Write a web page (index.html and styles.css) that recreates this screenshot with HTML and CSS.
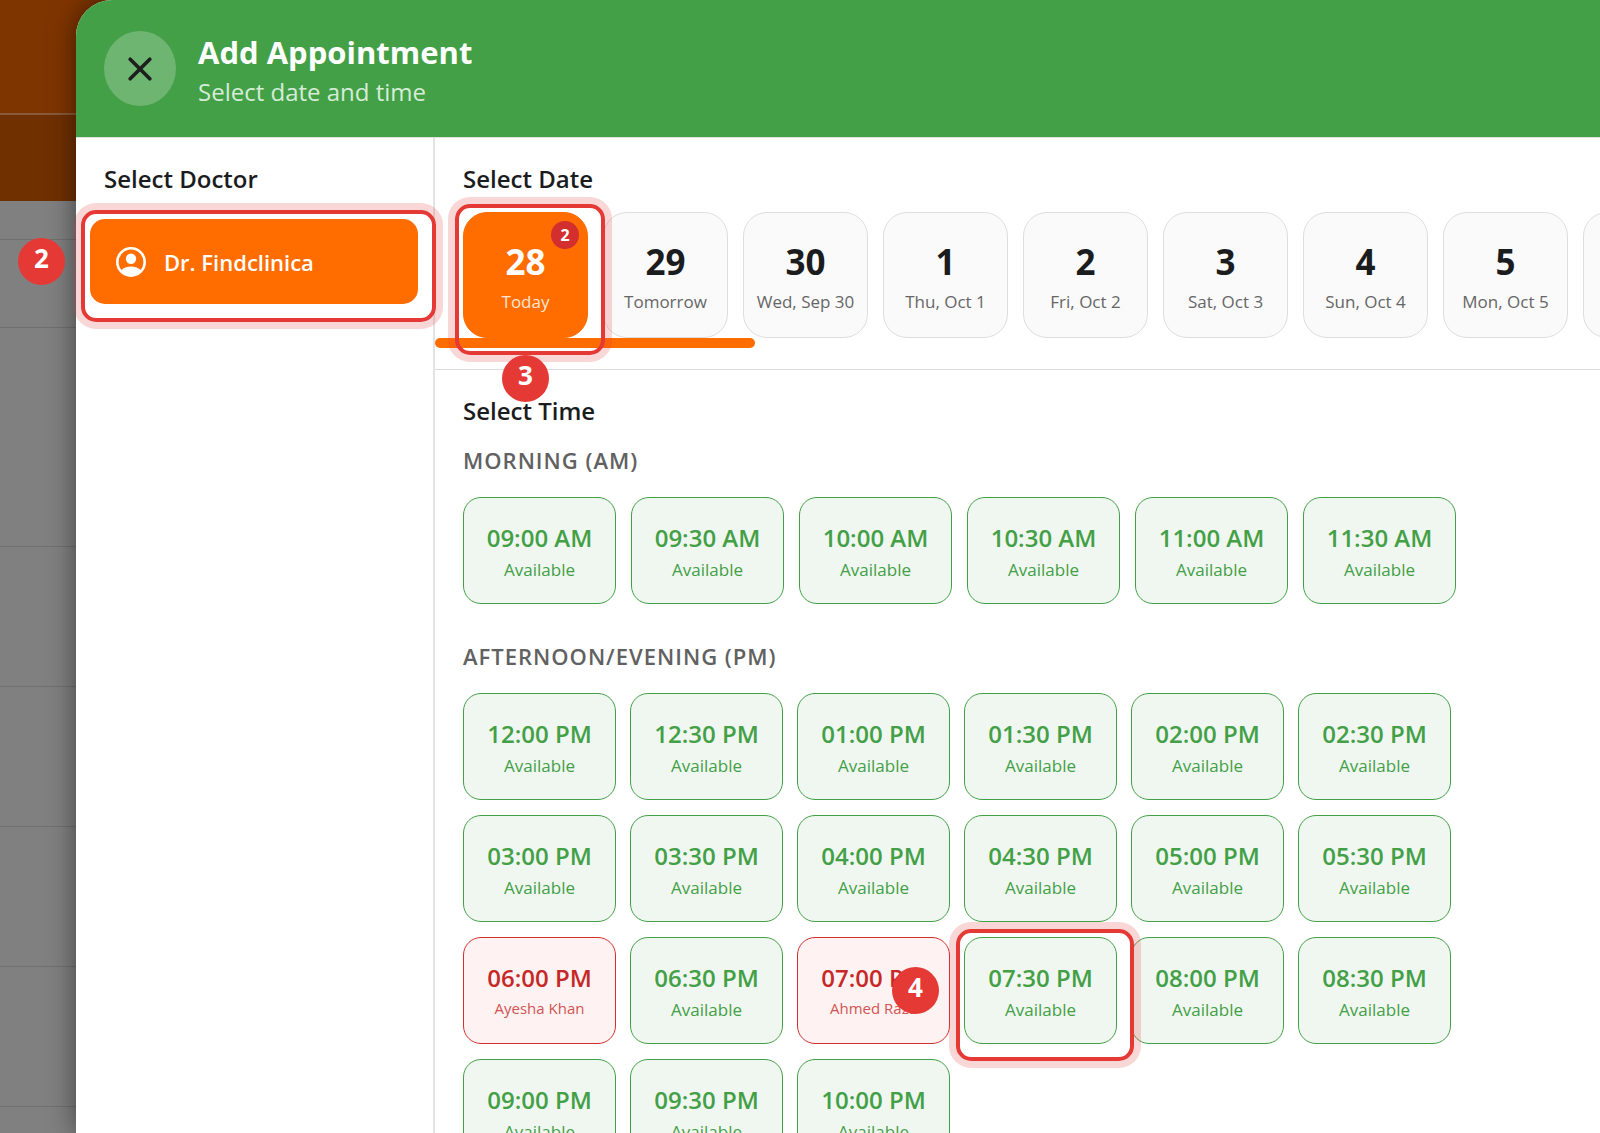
FILE: index.html
```html
<!DOCTYPE html>
<html lang="en">
<head>
  <meta charset="UTF-8" />
  <meta name="viewport" content="width=device-width, initial-scale=1.0" />
  <title>Add Appointment</title>
  <link rel="stylesheet" href="styles.css">
</head>
<body>

  <!-- dimmed calendar behind the drawer -->
  <div class="backdrop">
    <div class="bar bar-top"></div>
    <div class="bar bar-sub"></div>
    <div class="line line-xs"></div>
    <div class="line line-sm"></div>
    <div class="line line-lg"></div>
    <div class="line"></div>
    <div class="line"></div>
    <div class="line"></div>
    <div class="line"></div>
    <span class="step step-doctor">2</span>
  </div>

  <div class="drawer">
    <header class="drawer-header">
      <button class="close" aria-label="Close">
        <svg width="24" height="24" viewBox="0 0 24 24" fill="none" stroke="#1c1f1c" stroke-width="3.6" stroke-linecap="round">
          <path d="M2.2 2.2l19.6 19.6M21.8 2.2L2.2 21.8" />
        </svg>
      </button>
      <div class="drawer-title">
        <h1>Add Appointment</h1>
        <p>Select date and time</p>
      </div>
    </header>

    <div class="drawer-body">
      <aside class="doctors">
        <h2>Select Doctor</h2>
        <button class="doctor">
          <svg width="30" height="30" viewBox="0 0 30 30">
            <circle cx="15" cy="15" r="13.7" fill="none" stroke="#fff" stroke-width="2.6" />
            <circle cx="15" cy="11.8" r="5.2" fill="#fff" />
            <path d="M5 23.6C7.2 20.8 11 19.4 15 19.4s7.8 1.4 10 4.2C22.8 26.8 19 28.6 15 28.6S7.2 26.8 5 23.6z" fill="#fff" />
          </svg>
          <span>Dr. Findclinica</span>
          <span class="highlight"></span>
        </button>
      </aside>

      <main class="picker">
        <section class="dates">
          <h2>Select Date</h2>
          <div class="date-list">
            <button class="date active">
              <b>28</b><span>Today</span>
              <i class="count">2</i>
              <span class="highlight"></span>
              <span class="step step-date">3</span>
            </button>
            <button class="date"><b>29</b><span>Tomorrow</span></button>
            <button class="date"><b>30</b><span>Wed, Sep 30</span></button>
            <button class="date"><b>1</b><span>Thu, Oct 1</span></button>
            <button class="date"><b>2</b><span>Fri, Oct 2</span></button>
            <button class="date"><b>3</b><span>Sat, Oct 3</span></button>
            <button class="date"><b>4</b><span>Sun, Oct 4</span></button>
            <button class="date"><b>5</b><span>Mon, Oct 5</span></button>
            <button class="date" aria-label="Next day"></button>
          </div>
          <div class="scroll-thumb"></div>
        </section>

        <section class="times">
          <h2>Select Time</h2>

          <h3>MORNING (AM)</h3>
          <div class="slots slots-am">
            <button class="slot"><b>09:00 AM</b><span>Available</span></button>
            <button class="slot"><b>09:30 AM</b><span>Available</span></button>
            <button class="slot"><b>10:00 AM</b><span>Available</span></button>
            <button class="slot"><b>10:30 AM</b><span>Available</span></button>
            <button class="slot"><b>11:00 AM</b><span>Available</span></button>
            <button class="slot"><b>11:30 AM</b><span>Available</span></button>
          </div>

          <h3>AFTERNOON/EVENING (PM)</h3>
          <div class="slots">
            <button class="slot"><b>12:00 PM</b><span>Available</span></button>
            <button class="slot"><b>12:30 PM</b><span>Available</span></button>
            <button class="slot"><b>01:00 PM</b><span>Available</span></button>
            <button class="slot"><b>01:30 PM</b><span>Available</span></button>
            <button class="slot"><b>02:00 PM</b><span>Available</span></button>
            <button class="slot"><b>02:30 PM</b><span>Available</span></button>
            <button class="slot"><b>03:00 PM</b><span>Available</span></button>
            <button class="slot"><b>03:30 PM</b><span>Available</span></button>
            <button class="slot"><b>04:00 PM</b><span>Available</span></button>
            <button class="slot"><b>04:30 PM</b><span>Available</span></button>
            <button class="slot"><b>05:00 PM</b><span>Available</span></button>
            <button class="slot"><b>05:30 PM</b><span>Available</span></button>
            <button class="slot booked"><b>06:00 PM</b><span>Ayesha Khan</span></button>
            <button class="slot"><b>06:30 PM</b><span>Available</span></button>
            <button class="slot booked"><b>07:00 PM</b><span>Ahmed Raza</span></button>
            <button class="slot picked">
              <b>07:30 PM</b><span>Available</span>
              <span class="highlight"></span>
              <span class="step step-time">4</span>
            </button>
            <button class="slot"><b>08:00 PM</b><span>Available</span></button>
            <button class="slot"><b>08:30 PM</b><span>Available</span></button>
            <button class="slot"><b>09:00 PM</b><span>Available</span></button>
            <button class="slot"><b>09:30 PM</b><span>Available</span></button>
            <button class="slot"><b>10:00 PM</b><span>Available</span></button>
          </div>
        </section>
      </main>
    </div>
  </div>

</body>
</html>
```
FILE: styles.css
```css
* {
  box-sizing: border-box;
}

html, body {
  margin: 0;
  height: 100%;
  overflow: hidden;
}

body {
  display: flex;
  font-family: "Open Sans", "Noto Sans", sans-serif;
  background: #808080;
  color: #1b1c1e;
}

h1, h2, h3, p {
  margin: 0;
}

button {
  font-family: inherit;
  color: inherit;
  cursor: pointer;
}

/* calendar behind, runs under the rounded corner of the drawer */
.backdrop {
  position: relative;
  flex: 0 0 116px;
  margin-right: -40px;
}

.bar-top {
  height: 115px;
  background: #7f3500;
  border-bottom: 2px solid #875a3c;
}

.bar-sub {
  height: 86px;
  background: #703000;
}

.line {
  height: 140px;
  border-bottom: 1px solid #707070;
}

.line-xs {
  height: 39px;
}

.line-sm {
  height: 88px;
}

.line-lg {
  height: 219px;
}

/* drawer */
.drawer {
  position: relative;
  flex: 1;
  min-width: 0;
  height: 100vh;
  display: flex;
  flex-direction: column;
  background: #fff;
  border-top-left-radius: 36px;
  box-shadow: 0 0 28px rgba(0, 0, 0, 0.5);
}

.drawer-header {
  display: flex;
  align-items: center;
  gap: 22px;
  height: 137px;
  flex-shrink: 0;
  padding: 0 28px;
  background: #43a047;
  border-top-left-radius: 36px;
  color: #fff;
}

.close {
  display: flex;
  align-items: center;
  justify-content: center;
  width: 72px;
  height: 75px;
  padding: 0;
  border: none;
  border-radius: 50%;
  background: #6eb571;
}

.drawer-title {
  padding-top: 5px;
}

.drawer-header h1 {
  font-size: 31px;
  line-height: 42px;
  font-weight: 700;
}

.drawer-header p {
  font-size: 24px;
  line-height: 38px;
  color: #d6ecd7;
}

.drawer-body {
  flex: 1;
  min-height: 0;
  display: flex;
  border-top: 1px solid #e0e0e0;
}

h2 {
  font-size: 24px;
  line-height: 32px;
  font-weight: 600;
}

/* doctors */
.doctors {
  flex: 0 0 359px;
  padding: 25px 15px 0 14px;
  border-right: 2px solid #e3e3e5;
}

.doctors h2 {
  padding-left: 14px;
  margin-bottom: 24px;
}

.doctor {
  position: relative;
  display: flex;
  align-items: center;
  gap: 18px;
  width: 100%;
  height: 85px;
  padding: 0 26px;
  border: none;
  border-radius: 15px;
  background: #ff6d00;
  color: #fff;
  font-size: 22px;
  font-weight: 600;
}

/* dates */
.picker {
  flex: 1;
  min-width: 0;
  overflow: hidden;
}

.dates {
  padding: 25px 0 21px 28px;
  border-bottom: 1px solid #dcdcdc;
}

.date-list {
  display: flex;
  gap: 15px;
  margin-top: 17px;
}

.date {
  position: relative;
  flex: 0 0 125px;
  display: flex;
  flex-direction: column;
  align-items: center;
  height: 126px;
  padding: 27px 0 0;
  border: 1px solid #dedede;
  border-radius: 24px;
  background: #fafafa;
  white-space: nowrap;
}

.date b {
  font-size: 35px;
  line-height: 44px;
}

.date span {
  font-size: 17px;
  line-height: 24px;
  margin-top: 6px;
  color: #666;
}

.date.active {
  z-index: 2;
  border-color: #ff6d00;
  background: #ff6d00;
  color: #fff;
}

.date.active span {
  color: #ffe6d5;
}

.count {
  position: absolute;
  top: 8px;
  right: 8px;
  width: 28px;
  height: 28px;
  border-radius: 50%;
  background: #d32f2f;
  font-size: 16px;
  line-height: 29px;
  font-style: normal;
  font-weight: 700;
}

.scroll-thumb {
  width: 320px;
  height: 10px;
  margin-left: -28px;
  border-radius: 5px;
  background: #ff6d00;
}

/* times */
.times {
  padding: 25px 28px 0;
}

h3 {
  margin: 18px 0 22px;
  font-size: 22px;
  line-height: 30px;
  font-weight: 600;
  letter-spacing: 1px;
  color: #616161;
}

.slots {
  display: flex;
  flex-wrap: wrap;
  gap: 15px 14px;
}

.slots-am {
  gap: 15px;
  margin-bottom: 37px;
}

.slot {
  position: relative;
  display: flex;
  flex-direction: column;
  align-items: center;
  width: 153px;
  height: 107px;
  padding: 24px 0 0;
  border: 1px solid #43a047;
  border-radius: 18px;
  background: #f0f7f0;
  color: #43a047;
  white-space: nowrap;
}

.slot b {
  font-size: 24px;
  line-height: 32px;
  font-weight: 600;
}

.slot span {
  font-size: 17px;
  line-height: 24px;
  margin-top: 4px;
}

.slot.booked {
  border-color: #d32f2f;
  background: #fef3f2;
  color: #c62828;
}

.slot.booked span {
  font-size: 15px;
  line-height: 20px;
  color: #d15353;
}

.slot.picked {
  z-index: 2;
}

/* tutorial marks */
.highlight {
  position: absolute;
  inset: -9px -18px -18px -9px;
  border: 4px solid #e53935;
  border-radius: 15px;
  box-shadow: 0 0 0 7px rgba(229, 57, 53, 0.2);
  pointer-events: none;
}

.date .highlight,
.slot .highlight {
  margin: 0;
}

.step,
.date.active .step,
.slot .step {
  position: absolute;
  z-index: 3;
  width: 47px;
  height: 47px;
  margin: 0;
  border-radius: 50%;
  background: #e53935;
  color: #fff;
  font-size: 26px;
  line-height: 40px;
  font-weight: 700;
  text-align: center;
}

.step-doctor {
  top: 238px;
  left: 18px;
}

.step-date {
  top: 142px;
  left: 38px;
}

.step-time {
  top: 29px;
  left: -73px;
}
```
